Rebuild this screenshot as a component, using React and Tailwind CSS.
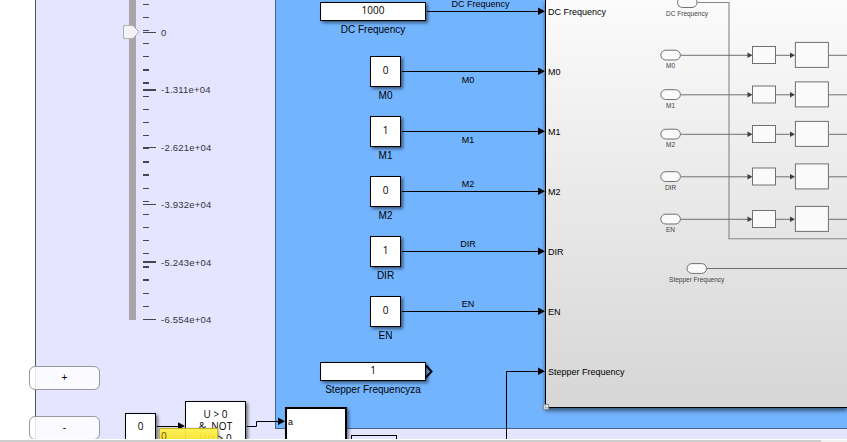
const SCALE_LABELS = ["0", "-1.311e+04", "-2.621e+04", "-3.932e+04", "-5.243e+04", "-6.554e+04"];

// [top, thickness]
const MAJOR_TICKS = [[32, 1], [89, 2], [147, 1], [204, 1], [261, 2], [319, 1]];
const MINOR_TICKS = [
  [4, 1], [17, 1], [30, 1], [43, 1], [56, 1], [69, 2], [82, 2], [96, 1], [109, 1], [122, 1],
  [135, 1], [147, 2], [161, 2], [174, 2], [188, 1], [201, 1], [214, 1], [227, 1], [240, 1],
  [253, 1], [266, 2], [279, 2], [293, 1], [306, 1],
];

const CONSTANTS = [
  { name: "M0", value: "0", labelBelow: true },
  { name: "M1", value: "1", labelBelow: true },
  { name: "M2", value: "0", labelBelow: false },
  { name: "DIR", value: "1", labelBelow: false },
  { name: "EN", value: "0", labelBelow: false },
];

const PORTS = ["DC Frequency", "M0", "M1", "M2", "DIR", "EN", "Stepper Frequency"];

const INNER_ROWS = [
  { name: "M0", y: 55 },
  { name: "M1", y: 94.5 },
  { name: "M2", y: 134 },
  { name: "DIR", y: 176.5 },
  { name: "EN", y: 219 },
];

function VerticalSlider() {
  return (
    <div className="flex pl-[93px]">
      <div className="relative h-[320px] w-[7px] bg-[#a8a6a9]">
        <svg className="absolute top-[24px] left-[-6px]" width="18" height="16">
          <path d="M0.5 1.5H10L16 8L10 14.5H0.5Z" fill="#f3f3f7" stroke="#b0aeb4" />
        </svg>
      </div>
      <svg className="ml-[7px] shrink-0" width="13" height="330" fill="#47464f">
        {MINOR_TICKS.map(([y, h]) => (
          <rect key={y} x="0" y={y} width="6" height={h} />
        ))}
        {MAJOR_TICKS.map(([y, h]) => (
          <rect key={y} x="0" y={y} width="13" height={h} />
        ))}
      </svg>
      <div className="mt-[28px] ml-[5px] flex h-[297px] flex-col justify-between text-[9.5px] leading-[10px] tracking-[0.22px] text-[#35343e]">
        {SCALE_LABELS.map((label) => (
          <span key={label}>{label}</span>
        ))}
      </div>
    </div>
  );
}

function Box({ wide, children }) {
  return (
    <div
      className={`flex shrink-0 items-center justify-center border border-black bg-white pb-[3px] font-['Open_Sans','Noto_Sans',sans-serif] leading-none shadow-[2px_2px_3px_rgba(0,0,0,0.5)] ${
        wide ? "h-[19px] w-[106px]" : "h-[31px] w-[31px]"
      }`}
    >
      {children}
    </div>
  );
}

function Constant({ name, value, wide }) {
  return (
    <div className={`flex shrink-0 flex-col items-center gap-1 leading-[10px] ${wide ? "w-[106px]" : "w-[31px]"}`}>
      <Box wide={wide}>{value}</Box>
      <span className="whitespace-nowrap">{name}</span>
    </div>
  );
}

function Wire({ width }) {
  return (
    <svg className="shrink-0" width={width} height="9">
      <path d={`M1 4.5H${width - 5}`} stroke="#000" />
      <path d={`M${width - 7} 0.5L${width} 4.2L${width - 7} 8Z`} />
    </svg>
  );
}

function SignalName({ children }) {
  return <span className="pr-[10px] text-center text-[9px] leading-[10px]">{children}</span>;
}

function ConstantsColumn() {
  return (
    <div className="flex w-[269px] shrink-0 flex-col">
      <div className="flex h-[41px] pt-[2px] pl-[44px]">
        <Constant name="DC Frequency" value="1000" wide />
        <div className="-mt-[3px] flex flex-1 flex-col">
          <SignalName>DC Frequency</SignalName>
          <div className="-mt-[2px] flex">
            <Wire width={119} />
          </div>
        </div>
      </div>
      {CONSTANTS.map((c) => (
        <div key={c.name} className="flex h-[60px] pt-[15px] pl-[94px]">
          <Constant name={c.name} value={c.value} />
          {c.labelBelow ? (
            <div className="flex flex-1 flex-col pt-[11px]">
              <Wire width={144} />
              <div className="-mt-px flex justify-center">
                <SignalName>{c.name}</SignalName>
              </div>
            </div>
          ) : (
            <div className="flex flex-1 flex-col pt-[3px]">
              <SignalName>{c.name}</SignalName>
              <div className="-mt-[2px] flex">
                <Wire width={144} />
              </div>
            </div>
          )}
        </div>
      ))}
      <div className="flex pt-[21px] pl-[44px]">
        <Constant name="Stepper Frequencyza" value="1" wide />
        <svg className="mt-[2px] -ml-px" width="10" height="15">
          <path d="M1 1.5L6.5 7.5L1 13.5" fill="none" stroke="#000" strokeWidth="2" />
        </svg>
      </div>
    </div>
  );
}

function SubsystemPreview() {
  return (
    <svg className="shrink-0" width="201" height="407" viewBox="646 0 201 407" fill="#fafafa" stroke="#707070">
      <path d="M697 2.5H729V238.7H847" fill="none" stroke="#858585" strokeWidth="1.1" />
      <path d="M707 268.5H847" fill="none" />
      <rect x="677.5" y="-2.5" width="19.5" height="10" rx="5" />
      <rect x="687" y="263.6" width="19.5" height="9.8" rx="4.9" />
      {INNER_ROWS.map(({ name, y }) => (
        <g key={name}>
          <path d={`M681 ${y + 0.3}H749M776 ${y + 0.3}H792M829 ${y + 0.3}H847`} />
          <path
            d={`M747.5 ${y - 2.4}L752.5 ${y + 0.3}L747.5 ${y + 3}ZM790 ${y - 2.4}L795 ${y + 0.3}L790 ${y + 3}Z`}
            fill="#404040"
            stroke="none"
          />
          <rect x="660.8" y={y - 4.8} width="19.6" height="9.8" rx="4.9" />
          <rect x="752.5" y={y - 8.5} width="23" height="17" />
          <rect x="795.4" y={y - 12.6} width="33" height="25" />
        </g>
      ))}
      <g fill="#404040" stroke="none" fontSize="6.5" textAnchor="middle">
        <text x="687" y="16.2">DC Frequency</text>
        {INNER_ROWS.map(({ name, y }) => (
          <text key={name} x="670.5" y={y + 13.2}>{name}</text>
        ))}
        <text x="696.7" y="282.2">Stepper Frequency</text>
      </g>
    </svg>
  );
}

function Subsystem() {
  return (
    <div className="relative flex h-[408px] flex-1 border-b border-l border-black bg-linear-to-b from-[#fbfbfb] to-[#d6d6d6] shadow-[0_3px_4px_rgba(0,0,0,0.5)]">
      <div className="flex w-[100px] shrink-0 flex-col gap-10 pt-[2px] pl-[2px] text-[9px] leading-[20px]">
        {PORTS.map((port) => (
          <span key={port}>{port}</span>
        ))}
      </div>
      <SubsystemPreview />
      <div className="absolute -bottom-[3px] -left-[3px] size-[6px] border border-[#8c8c8c] bg-white/70" />
    </div>
  );
}

function ComparisonNodes() {
  return (
    <>
      <div className="absolute top-[407px] left-[285px] flex h-[60px] w-[62px] border-2 border-black bg-white pt-[8px] pl-px text-[9px] leading-[10px] shadow-[2px_2px_3px_rgba(0,0,0,0.45)]">
        a
      </div>
      <div className="absolute top-[435px] left-[351px] h-[20px] w-[46px] border border-black bg-[#e5e5ff]" />
      <div className="absolute top-[413px] left-[125px] flex h-[40px] w-[31px] justify-center border border-black bg-white pt-[7px] font-['Open_Sans','Noto_Sans',sans-serif] leading-[10px] shadow-[2px_2px_3px_rgba(0,0,0,0.5)]">
        0
      </div>
      <div className="absolute top-[401px] left-[185px] flex h-[60px] w-[61px] flex-col items-center border border-black bg-white pt-[6px] font-['Open_Sans','Noto_Sans',sans-serif] leading-[12px] whitespace-pre shadow-[2px_2px_3px_rgba(0,0,0,0.5)]">
        <span>{"U > 0"}</span>
        <span>{"&  NOT"}</span>
        <span>{"U/z > 0"}</span>
      </div>
      <svg className="absolute top-0 left-0" width="847" height="439" fill="none" stroke="#000">
        <path d="M506.5 439V371.5H540M157 426.5H180M247 426.5H256.5V421.5H280" />
        <path
          d="M538 367.5L545 371.2L538 375ZM278 417.6L285 421.3L278 425ZM178 422.3L185 426L178 429.7Z"
          fill="#000"
          stroke="none"
        />
      </svg>
      <div className="absolute top-[428px] left-[159px] flex h-[20px] w-[59px] border border-[#a89c30]/70 bg-linear-to-b from-[#fff04a]/95 to-[#f5dd00]/90 pt-[2px] pl-px font-['Open_Sans','Noto_Sans',sans-serif] leading-[10px] text-[#5c5200] shadow-[1px_1px_3px_rgba(0,0,0,0.4)]">
        0
      </div>
    </>
  );
}

function ZoomButton({ children }) {
  return (
    <button className="flex h-[24px] w-[71px] items-center justify-center rounded-[6px] border border-[#99989f] bg-white/85 pb-px leading-none">
      {children}
    </button>
  );
}

export default function App() {
  return (
    <div className="flex h-[442px] w-[847px] flex-col overflow-hidden bg-white font-['Liberation_Sans',Arial,sans-serif] text-[10px] text-black">
      <main className="relative flex h-[439px] w-full shrink-0 overflow-hidden pl-[35px]">
        <section className="h-full w-[240px] shrink-0 border-l border-[#54545e] bg-[#e5e5ff]">
          <VerticalSlider />
        </section>
        <section className="h-full flex-1 bg-[#e5e5ff]">
          <div className="flex h-[429px] items-start border-b border-l border-[#44658c] bg-[#73b4ff]">
            <ConstantsColumn />
            <Subsystem />
          </div>
        </section>
        <ComparisonNodes />
        <div className="absolute top-[366px] left-[29px] flex flex-col gap-[26px]">
          <ZoomButton>+</ZoomButton>
          <ZoomButton>-</ZoomButton>
        </div>
      </main>
      <div className="mt-px flex h-[2px] bg-[#f0f0f0]">
        <div className="h-full w-[821px] bg-[#cdcdcd]" />
      </div>
    </div>
  );
}
